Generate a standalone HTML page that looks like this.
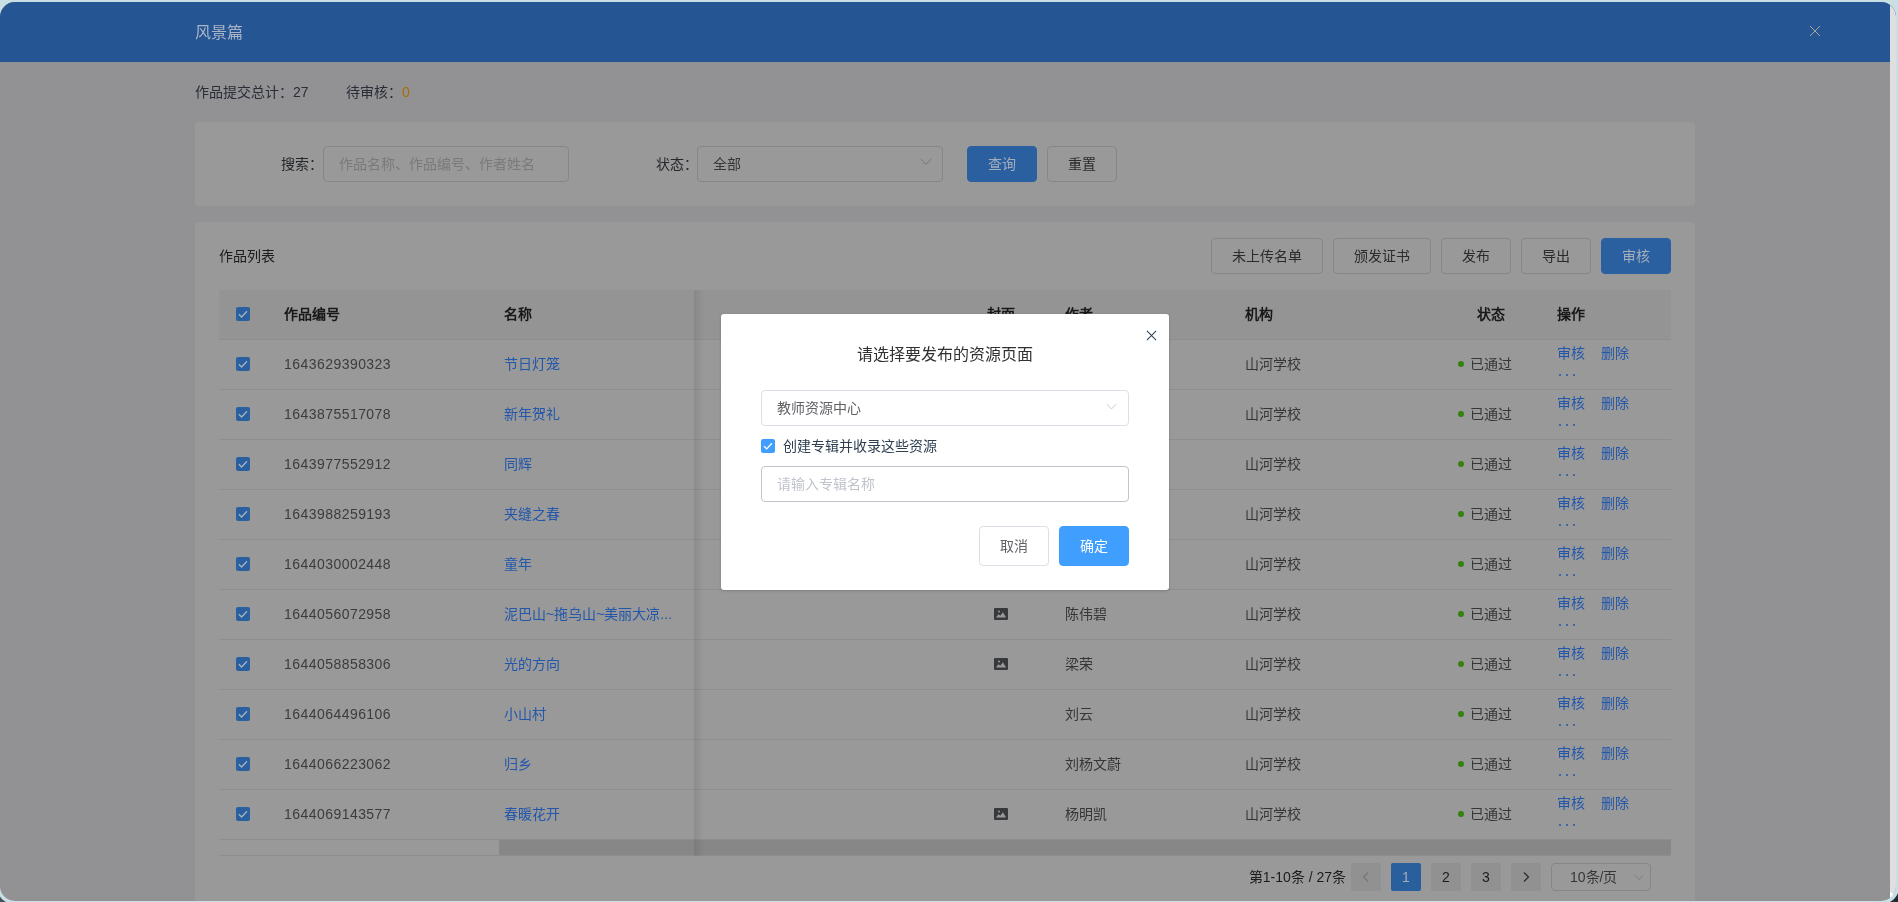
<!DOCTYPE html>
<html lang="zh-CN"><head><meta charset="utf-8"><title>风景篇</title>
<style>
*{box-sizing:border-box;margin:0;padding:0}
html,body{width:1898px;height:902px;overflow:hidden}
body{background:#c8dfe3;font-family:"Liberation Sans",sans-serif;font-size:14px;color:#363636;position:relative}
.dk{position:absolute;width:10px;height:10px;background:#1f2b35;bottom:0}
.dkl{left:0;background:#4a4f5c}.dkr{right:0}
#win{position:absolute;left:0;top:2px;width:1896px;height:898.6px;border-radius:15px;overflow:hidden;background:#929294;box-shadow:0 0 0 3.5px #c8dfe3;will-change:transform}
.hdr{position:absolute;left:0;top:0;width:1896px;height:60px;background:#265594}
.ttl{position:absolute;left:195px;top:1px;line-height:60px;font-size:16px;color:#a9b4c6}
.hx{position:absolute;left:1809px;top:23px;width:12px;height:12px}
.stat{position:absolute;top:80px;line-height:20px;color:#282d36;white-space:nowrap}
.s1{left:195px}.s2{left:346px}
.or{color:#a86e05}
.card{position:absolute;left:195px;width:1500px;background:#999;border-radius:4px}
.c1{top:120px;height:84px}
.c2{top:220px;height:700px}
.lbl{position:absolute;top:32px;line-height:20px;color:#25272c;white-space:nowrap}
.l1{left:86px}.l2{left:461px}
.inp{position:absolute;top:24px;width:246px;height:36px;border:1px solid #84868a;border-radius:4px;line-height:34px;padding-left:15px;white-space:nowrap}
.i1{left:128px}.i2{left:502px}
.ph{color:#7a7a7a}
.val{color:#363636}
.arr{position:absolute;right:10.5px;top:11px;width:12px;height:8px}
.btn{position:absolute;height:36px;line-height:34px;border:1px solid #84868a;border-radius:4px;text-align:center;color:#2b2b2b;white-space:nowrap}
.btn.pri{background:#2a609f;border-color:#2a609f;color:#a4adba}
.b1{left:772px;top:24px;width:70px}
.b2{left:852px;top:24px;width:70px}
.ctitle{position:absolute;left:24px;top:24px;line-height:20px;color:#1c1c1c}
.t1{left:1016px;top:16px;width:112px}
.t2{left:1138px;top:16px;width:98px}
.t3{left:1246px;top:16px;width:70px}
.t4{left:1326px;top:16px;width:70px}
.t5{left:1406px;top:16px;width:70px}
.thead{position:absolute;left:24px;top:68px;width:1452px;height:50px;background:#949494;border-bottom:1px solid #8c8e93;line-height:48px;color:#181818}
.thead b{position:absolute;top:0;font-weight:bold;white-space:nowrap}
.tr{position:absolute;left:24px;width:1452px;height:50px;border-bottom:1px solid #8c8e93;line-height:49px}
.tr>span,.tr>a{position:absolute;top:0;white-space:nowrap}
a{color:#2257ab;text-decoration:none}
.thead .cb,.tr .cb{position:absolute;left:17px;top:17px;width:14px;height:14px;background:#2a609f;border-radius:2px;color:#a9b2bf}
.cb svg,.mcb svg{display:block;width:14px;height:14px}
.c-no{left:65px}.tr .c-no{letter-spacing:.45px;color:#3c3c3c}.c-nm{left:285px}.c-cv{left:768px;width:28px;text-align:center}.c-au{left:846px}.c-org{left:1026px}.c-st{left:1258px}.c-op{left:1338px}
.tr .c-cv{left:775px;width:14px}
.tr .c-st{left:1238px}
.pic{position:absolute;left:0;top:18px;width:14px;height:12px}
.dot{position:absolute;left:1px;top:21px;width:6px;height:6px;border-radius:50%;background:#36820f}
.tr .c-st{padding-left:13px}
.tr .op1{left:1338px;top:-11px}.tr .op2{left:1382px;top:-11px}
.tr .op3{left:1339.4px;top:34.2px;width:20px;height:4px}
.op3 i{position:absolute;top:0;width:2px;height:2px;border-radius:50%;background:#2257ab}
.op3 i:nth-child(1){left:1px}.op3 i:nth-child(2){left:8px}.op3 i:nth-child(3){left:15px}
.fixsh{position:absolute;left:499px;top:68px;width:11px;height:566px;background:linear-gradient(90deg,rgba(0,0,0,.085),rgba(0,0,0,.03) 55%,rgba(0,0,0,0))}
.hsb{position:absolute;left:304px;top:618px;width:1172px;height:15px;background:#878787;border-radius:2px}
.hsl{position:absolute;left:24px;top:633px;width:1452px;height:1px;background:#8c8e93}
.pg{position:absolute;left:0;top:641px;width:1500px;height:28px;line-height:28px;color:#1c1c1c}
.pgt{position:absolute;right:349px;top:0;white-space:nowrap;color:#1c1c1c}
.pi{position:absolute;top:0;width:30px;height:28px;line-height:29px;background:#919191;border-radius:2px;text-align:center;color:#1c1c1c}
.pi svg{width:10px;height:12px;margin-top:8px}
.p0{left:1156px}.p1{left:1196px}.p2{left:1236px}.p3{left:1276px}.p4{left:1316px}
.pi.act{background:#2a5f9d;color:#a4adba}
.psz{position:absolute;left:1356px;top:0;width:100px;height:28px;border:1px solid #84868a;border-radius:4px;padding-left:18px;line-height:26px;color:#363636;white-space:nowrap}
.arr2{position:absolute;right:6px;top:10px;width:10px;height:7px}
.vsb{position:absolute;left:1890px;top:0;width:6px;height:899px;background:#dfdfe1}
.vsb i{position:absolute;left:0;bottom:0;width:6px;height:9px;background:#fff;clip-path:polygon(0 0,100% 45%,100% 100%,0 100%)}
.modal{will-change:transform;position:absolute;left:721px;top:314px;width:448px;height:276px;background:#fff;border-radius:3px;box-shadow:0 1px 3px rgba(0,0,0,.18);color:#606266}
.mx{position:absolute;left:424.6px;top:15.6px;width:11px;height:11px}
.mt{position:absolute;left:0;top:29px;width:448px;text-align:center;font-size:16px;line-height:24px;color:#303133}
.msel,.minp{position:absolute;left:40px;width:368px;height:36px;border:1px solid #dcdfe6;border-radius:4px;line-height:34px;padding-left:15px;white-space:nowrap}
.msel{top:76px;color:#606266}
.msel svg{position:absolute;right:11px;top:11.5px;width:11px;height:7.5px}
.minp{top:152px;border-color:#c0c4cc;color:#c0c4cc}
.mcb{position:absolute;left:40px;top:125px;width:14px;height:14px;background:#409eff;border-radius:2px}
.mcl{position:absolute;left:62px;top:122px;line-height:20px;color:#2c3e50;white-space:nowrap}
.mb{position:absolute;top:212px;width:70px;height:40px;line-height:38px;border:1px solid #dcdfe6;border-radius:4px;text-align:center;color:#606266}
.mb1{left:258px}
.mb2{left:338px;background:#409eff;border-color:#409eff;color:#fff}

</style></head>
<body>
<div class="dk dkl"></div><div class="dk dkr"></div>
<div id="win">
<div class="hdr"><span class="ttl">风景篇</span><svg class="hx" viewBox="0 0 12 12"><path d="M1 1 L11 11 M11 1 L1 11" stroke="#a9a59d" stroke-width="1" fill="none"/></svg></div>
<div class="stat s1">作品提交总计：27</div><div class="stat s2">待审核：<span class="or">0</span></div>
<div class="card c1">
<span class="lbl l1">搜索：</span><div class="inp i1"><span class="ph">作品名称、作品编号、作者姓名</span></div>
<span class="lbl l2">状态：</span><div class="inp i2"><span class="val">全部</span><svg class="arr" viewBox="0 0 12 8"><path d="M1 1.2 L6 6.4 L11 1.2" fill="none" stroke="#73767e" stroke-width="1"/></svg></div>
<div class="btn pri b1">查询</div><div class="btn b2">重置</div>
</div>
<div class="card c2">
<span class="ctitle">作品列表</span>
<div class="btn t1">未上传名单</div><div class="btn t2">颁发证书</div><div class="btn t3">发布</div><div class="btn t4">导出</div><div class="btn pri t5">审核</div>
<div class="thead"><span class="cb"><svg viewBox="0 0 14 14"><path d="M2.9 7.3 L5.6 10 L11 4.2" fill="none" stroke="currentColor" stroke-width="1.3"/></svg></span><b class="c-no">作品编号</b><b class="c-nm">名称</b><b class="c-cv">封面</b><b class="c-au">作者</b><b class="c-org">机构</b><b class="c-st">状态</b><b class="c-op">操作</b></div>
<div class="tr" style="top:118px"><span class="cb"><svg viewBox="0 0 14 14"><path d="M2.9 7.3 L5.6 10 L11 4.2" fill="none" stroke="currentColor" stroke-width="1.3"/></svg></span><span class="c-no">1643629390323</span><a class="c-nm">节日灯笼</a><span class="c-org">山河学校</span><span class="c-st"><i class="dot"></i>已通过</span><a class="op1">审核</a><a class="op2">删除</a><span class="op3"><i></i><i></i><i></i></span></div>
<div class="tr" style="top:168px"><span class="cb"><svg viewBox="0 0 14 14"><path d="M2.9 7.3 L5.6 10 L11 4.2" fill="none" stroke="currentColor" stroke-width="1.3"/></svg></span><span class="c-no">1643875517078</span><a class="c-nm">新年贺礼</a><span class="c-org">山河学校</span><span class="c-st"><i class="dot"></i>已通过</span><a class="op1">审核</a><a class="op2">删除</a><span class="op3"><i></i><i></i><i></i></span></div>
<div class="tr" style="top:218px"><span class="cb"><svg viewBox="0 0 14 14"><path d="M2.9 7.3 L5.6 10 L11 4.2" fill="none" stroke="currentColor" stroke-width="1.3"/></svg></span><span class="c-no">1643977552912</span><a class="c-nm">同辉</a><span class="c-org">山河学校</span><span class="c-st"><i class="dot"></i>已通过</span><a class="op1">审核</a><a class="op2">删除</a><span class="op3"><i></i><i></i><i></i></span></div>
<div class="tr" style="top:268px"><span class="cb"><svg viewBox="0 0 14 14"><path d="M2.9 7.3 L5.6 10 L11 4.2" fill="none" stroke="currentColor" stroke-width="1.3"/></svg></span><span class="c-no">1643988259193</span><a class="c-nm">夹缝之春</a><span class="c-org">山河学校</span><span class="c-st"><i class="dot"></i>已通过</span><a class="op1">审核</a><a class="op2">删除</a><span class="op3"><i></i><i></i><i></i></span></div>
<div class="tr" style="top:318px"><span class="cb"><svg viewBox="0 0 14 14"><path d="M2.9 7.3 L5.6 10 L11 4.2" fill="none" stroke="currentColor" stroke-width="1.3"/></svg></span><span class="c-no">1644030002448</span><a class="c-nm">童年</a><span class="c-org">山河学校</span><span class="c-st"><i class="dot"></i>已通过</span><a class="op1">审核</a><a class="op2">删除</a><span class="op3"><i></i><i></i><i></i></span></div>
<div class="tr" style="top:368px"><span class="cb"><svg viewBox="0 0 14 14"><path d="M2.9 7.3 L5.6 10 L11 4.2" fill="none" stroke="currentColor" stroke-width="1.3"/></svg></span><span class="c-no">1644056072958</span><a class="c-nm">泥巴山~拖乌山~美丽大凉...</a><span class="c-cv"><svg class="pic" viewBox="0 0 14 12"><rect x="0" y="0" width="14" height="12" rx="1" fill="#38393c"/><circle cx="5" cy="3.6" r="1" fill="#999"/><path d="M2 9.6 L4.4 6.2 L6.3 7.7 L8.9 4.2 L12.1 9.6 Z" fill="#999"/></svg></span><span class="c-au">陈伟碧</span><span class="c-org">山河学校</span><span class="c-st"><i class="dot"></i>已通过</span><a class="op1">审核</a><a class="op2">删除</a><span class="op3"><i></i><i></i><i></i></span></div>
<div class="tr" style="top:418px"><span class="cb"><svg viewBox="0 0 14 14"><path d="M2.9 7.3 L5.6 10 L11 4.2" fill="none" stroke="currentColor" stroke-width="1.3"/></svg></span><span class="c-no">1644058858306</span><a class="c-nm">光的方向</a><span class="c-cv"><svg class="pic" viewBox="0 0 14 12"><rect x="0" y="0" width="14" height="12" rx="1" fill="#38393c"/><circle cx="5" cy="3.6" r="1" fill="#999"/><path d="M2 9.6 L4.4 6.2 L6.3 7.7 L8.9 4.2 L12.1 9.6 Z" fill="#999"/></svg></span><span class="c-au">梁荣</span><span class="c-org">山河学校</span><span class="c-st"><i class="dot"></i>已通过</span><a class="op1">审核</a><a class="op2">删除</a><span class="op3"><i></i><i></i><i></i></span></div>
<div class="tr" style="top:468px"><span class="cb"><svg viewBox="0 0 14 14"><path d="M2.9 7.3 L5.6 10 L11 4.2" fill="none" stroke="currentColor" stroke-width="1.3"/></svg></span><span class="c-no">1644064496106</span><a class="c-nm">小山村</a><span class="c-au">刘云</span><span class="c-org">山河学校</span><span class="c-st"><i class="dot"></i>已通过</span><a class="op1">审核</a><a class="op2">删除</a><span class="op3"><i></i><i></i><i></i></span></div>
<div class="tr" style="top:518px"><span class="cb"><svg viewBox="0 0 14 14"><path d="M2.9 7.3 L5.6 10 L11 4.2" fill="none" stroke="currentColor" stroke-width="1.3"/></svg></span><span class="c-no">1644066223062</span><a class="c-nm">归乡</a><span class="c-au">刘杨文蔚</span><span class="c-org">山河学校</span><span class="c-st"><i class="dot"></i>已通过</span><a class="op1">审核</a><a class="op2">删除</a><span class="op3"><i></i><i></i><i></i></span></div>
<div class="tr" style="top:568px"><span class="cb"><svg viewBox="0 0 14 14"><path d="M2.9 7.3 L5.6 10 L11 4.2" fill="none" stroke="currentColor" stroke-width="1.3"/></svg></span><span class="c-no">1644069143577</span><a class="c-nm">春暖花开</a><span class="c-cv"><svg class="pic" viewBox="0 0 14 12"><rect x="0" y="0" width="14" height="12" rx="1" fill="#38393c"/><circle cx="5" cy="3.6" r="1" fill="#999"/><path d="M2 9.6 L4.4 6.2 L6.3 7.7 L8.9 4.2 L12.1 9.6 Z" fill="#999"/></svg></span><span class="c-au">杨明凯</span><span class="c-org">山河学校</span><span class="c-st"><i class="dot"></i>已通过</span><a class="op1">审核</a><a class="op2">删除</a><span class="op3"><i></i><i></i><i></i></span></div>
<div class="hsb"></div><div class="hsl"></div><div class="fixsh"></div>
<div class="pg"><span class="pgt">第1-10条 / 27条</span><span class="pi p0"><svg viewBox="0 0 10 12"><path d="M7 1.5 L2.5 6 L7 10.5" fill="none" stroke="#777" stroke-width="1.2"/></svg></span><span class="pi p1 act">1</span><span class="pi p2">2</span><span class="pi p3">3</span><span class="pi p4"><svg viewBox="0 0 10 12"><path d="M3 1.5 L7.5 6 L3 10.5" fill="none" stroke="#2a2a2a" stroke-width="1.2"/></svg></span><span class="psz">10条/页<svg class="arr2" viewBox="0 0 12 8"><path d="M1 1.2 L6 6.4 L11 1.2" fill="none" stroke="#777" stroke-width="1"/></svg></span></div>
</div>
<div class="vsb"><i></i></div>
</div>
<div class="modal">
<svg class="mx" viewBox="0 0 12 12"><path d="M1 1 L11 11 M11 1 L1 11" stroke="#2c3e50" stroke-width="1.1" fill="none"/></svg>
<div class="mt">请选择要发布的资源页面</div>
<div class="msel"><span>教师资源中心</span><svg viewBox="0 0 12 8"><path d="M1 1.2 L6 6.4 L11 1.2" fill="none" stroke="#c0c4cc" stroke-width="1"/></svg></div>
<span class="mcb"><svg viewBox="0 0 14 14"><path d="M3 7.3 L5.7 9.9 L10.9 4.3" fill="none" stroke="#fff" stroke-width="1.35"/></svg></span><span class="mcl">创建专辑并收录这些资源</span>
<div class="minp"><span>请输入专辑名称</span></div>
<div class="mb mb1">取消</div><div class="mb mb2">确定</div>
</div>
</body></html>
